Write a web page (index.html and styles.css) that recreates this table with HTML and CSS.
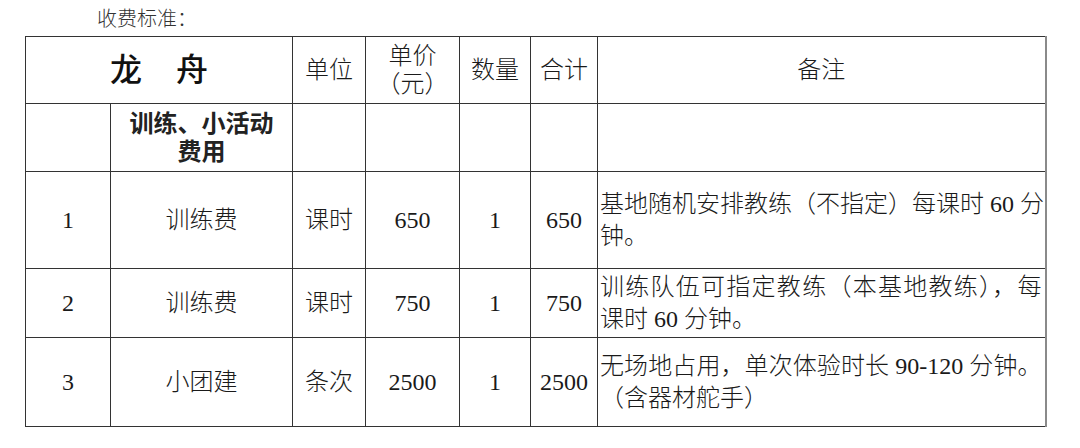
FILE: index.html
```html
<!DOCTYPE html>
<html lang="zh-CN">
<head>
<meta charset="utf-8">
<title>收费标准</title>
<link rel="stylesheet" href="styles.css">
</head>
<body>
<div class="page">
  <p class="caption">收费标准：</p>
  <table class="fees">
    <colgroup>
      <col class="c-no">
      <col class="c-item">
      <col class="c-unit">
      <col class="c-price">
      <col class="c-qty">
      <col class="c-total">
      <col class="c-note">
    </colgroup>
    <tr class="r-head">
      <th colspan="2" class="title">龙 舟</th>
      <th>单位</th>
      <th class="soft-l"><span class="ln">单价</span><span class="ln">（元）</span></th>
      <th>数量</th>
      <th>合计</th>
      <th class="soft-l">备注</th>
    </tr>
    <tr class="r-group">
      <td></td>
      <td class="group"><span class="ln">训练、小活动</span><span class="ln">费用</span></td>
      <td></td>
      <td class="soft-l"></td>
      <td></td>
      <td></td>
      <td class="soft-l"></td>
    </tr>
    <tr class="r-1">
      <td>1</td>
      <td>训练费</td>
      <td>课时</td>
      <td class="soft-l">650</td>
      <td>1</td>
      <td>650</td>
      <td class="note soft-l"><span class="ln full">基地随机安排教练（不指定）每课时 60 分</span><span class="ln">钟。</span></td>
    </tr>
    <tr class="r-2">
      <td>2</td>
      <td>训练费</td>
      <td>课时</td>
      <td class="soft-l">750</td>
      <td>1</td>
      <td>750</td>
      <td class="note soft-l"><span class="ln full">训练队伍可指定教练（本基地教练），每</span><span class="ln">课时 60 分钟。</span></td>
    </tr>
    <tr class="r-3">
      <td>3</td>
      <td>小团建</td>
      <td>条次</td>
      <td class="soft-l">2500</td>
      <td>1</td>
      <td>2500</td>
      <td class="note soft-l"><span class="ln full">无场地占用，单次体验时长 90-120 分钟。</span><span class="ln">（含器材舵手）</span></td>
    </tr>
  </table>
</div>
</body>
</html>
```

FILE: styles.css
```css
html, body {
  margin: 0;
  padding: 0;
  background: #ffffff;
}

.page {
  padding: 5px 0 0 25px;
  font-family: "Liberation Serif", "Noto Sans CJK SC", serif;
  color: #1a1a1a;
}

.caption {
  margin: 0 0 6px 72px;
  font-family: "Noto Sans CJK SC", sans-serif;
  font-weight: 300;
  font-size: 20px;
  line-height: 25px;
  color: #333333;
}

.fees {
  border-collapse: collapse;
  table-layout: fixed;
  width: 1021px;
  border-top: 1px solid #6a6a6a;
  border-right: 2px solid #8a8a8a;
}

.c-no { width: 85px; }
.c-item { width: 182px; }
.c-unit { width: 73px; }
.c-price { width: 94px; }
.c-qty { width: 71px; }
.c-total { width: 67px; }
.c-note { width: 448px; }

.fees th,
.fees td {
  border: 1px solid #333333;
  padding: 0 2px;
  text-align: center;
  vertical-align: middle;
  font-size: 24px;
  font-weight: 300;
  line-height: 28px;
  white-space: nowrap;
}

.fees .soft-l {
  border-left: 1px solid #8c8c8c;
}

.ln {
  display: block;
}

.r-head { height: 67px; }
.r-group { height: 68px; }
.r-1 { height: 97px; }
.r-2 { height: 69px; }
.r-3 { height: 89px; }

.fees .title {
  font-size: 32px;
  font-weight: 500;
  word-spacing: 26px;
  color: #111111;
}

.fees .group {
  font-weight: 700;
  line-height: 28px;
  color: #222222;
}

.fees .note {
  text-align: left;
  line-height: 32px;
  padding: 0 3px 0 2px;
}

.note .full {
  text-align: justify;
  text-align-last: justify;
}
```
